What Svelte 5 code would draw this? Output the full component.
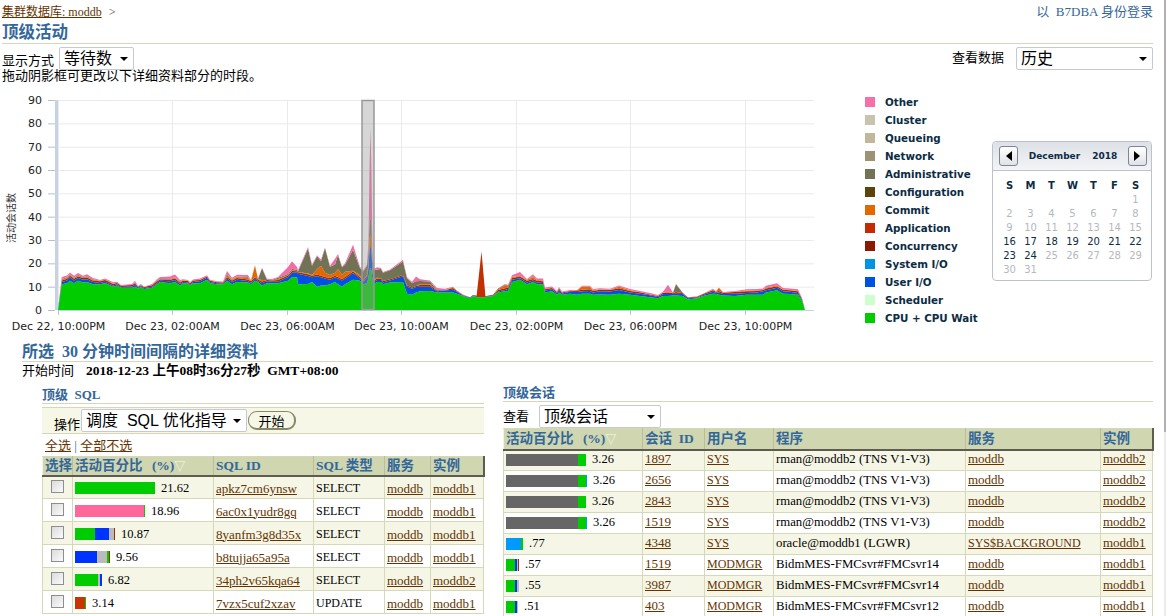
<script lang="ts">
	// x, cpu, blue, red/orange, olive, pink (session counts)
	const samples = [
		[58,0,0,0,0,0],[61.7,11,1,1,0.3,0.8],[67,11.5,1.2,1,0.3,0.8],[70,12.5,1.5,1,0.3,0.8],[74,11.5,1.2,1,0.2,0.8],[78,12.5,1.2,1,0.3,0.8],
		[83,11.8,1.2,0.8,0.3,0.6],[87,12,1.2,1,0.3,0.8],[93,11,1,1,0.2,0.5],[100,11,0.6,0.8,0.1,0.4],[105,11.5,0.6,0.8,0.1,0.5],[108,11,0.6,0.8,0.1,0.5],
		[113,10,0.5,0.8,0.1,0.5],[117,10.5,0.5,0.6,0.1,0.4],[121,9.5,0.4,0.5,0.1,0.2],[132,9.5,0.6,0.6,0.1,0.4],[135,10,0.8,1,0.1,0.6],[138,9.2,0.4,0.4,0.1,0.2],
		[141,9.8,0.4,0.4,0.1,0.4],[144,9,0.4,0.4,0,0.2],[152,9.5,0.5,0.6,0.1,0.4],[157,11,0.6,0.8,0.2,0.6],[160,12,0.5,0.6,0.2,0.9],[170,11.5,0.8,0.8,0.2,1],
		[175,12,0.8,1,0.2,1.2],[180,10.5,0.6,1,0.2,0.6],[183,11.5,0.5,0.6,0.1,0.5],[188,11.5,0.4,0.5,0.1,0.4],[190,10.5,0.4,0.6,0.1,0.4],[193,11.5,0.5,0.6,0.1,0.4],
		[200,11.5,0.8,0.6,0.1,0.5],[207,13,0.8,0.6,0.1,0.4],[210,11.5,0.5,0.5,0.1,0.4],[217,11,0.5,0.4,0.1,0.3],[223,11,0.4,0.4,0.1,0.3],[227,12.5,1,1.5,0.5,1.2],
		[232,11,1,1,0.2,0.6],[237,12,1,1,0.3,0.8],[248,11.8,0.6,1.4,0.4,0.8],[251,11,0.6,0.8,0.2,0.3],[255,12.5,1,5.5,0.1,0.2],[258,12,0.4,0.8,0.1,0.2],
		[262,10.5,1,1.4,5,0.2],[267,11.5,0.8,0.5,0.2,0.4],[272,11.5,0.6,0.5,0.3,0.4],[278,11.5,0.6,1.2,0.5,0.4],[288,12.5,1.6,0.8,0.5,3],[292,14,2,1,0.7,3.2],
		[297,14,2.2,0.4,0.6,1.2],[298,11,4.5,0.8,0.3,0.4],[308,11.2,3.4,1,10.7,0.7],[312,12,2,1,4,0.5],[317,10,4.5,3,5.5,0.5],[321,10.5,3.5,5,2,0.6],
		[325,10.5,3,2.5,10.5,0.3],[330,11,2,2,3.5,0.5],[335,12,2,2,3.5,2.5],[338,11,2.5,4,6,0.5],[342,10,2.6,2.5,3.2,0.3],[345,11,2.4,3,3,0.6],
		[353,13,2.8,1,9,2.2],[360,12.5,1,1.4,3.1,0.5],[363,11,0.8,0.6,4,0.4],[367,11.5,2.5,1,4,0.4],[368.5,14,4,2,5,4],[369.6,17,9,5,7,24],[370.5,18,9,5,7,39],
		[371.4,17,9,5,7,22],[372.5,13,3,1.5,4,3],[374,11,1,1,4,0.6],[377,12,0.8,1,3.5,1],[381,12,0.8,0.8,4,0.4],[383,11,0.8,0.6,3.6,0.3],[390,11.8,0.8,0.6,3.8,0.4],
		[403,12,2.5,0.5,5.8,0.7],[407,7,3,0.6,3,0.4],[412,6.5,2.6,0.6,1.8,0.6],[416,7.5,2.4,0.4,2,2],[420,8,2,1,1.4,0.8],[430,8.2,1.8,1,1.2,0.5],
		[437,7.5,0.5,0.4,0.2,0.8],[445,7.5,0.8,0.2,0.1,0.5],[453,7.5,1.2,1,0.1,0.2],[457,7,0.8,0.3,0.1,0.2],[463,6,0.2,0.2,0,0.2],[470,5,0.3,0.2,0,0],
		[473,6,0.2,0.2,0,0],[477,5.5,0.2,0.4,0,0],[485,5.5,0.2,0.2,0,0],[493,6,0.2,0.3,0,0],[498,7.5,0.4,1,0.3,0],
		[505,8,0.6,2,0.3,0.2],[508,8,1,1.5,0.1,0.2],[512,12,1,1,0.1,0.8],[520,13,0.6,1,0.1,1.6],[527,11,0.8,1,0.1,0.4],[533,12,0.6,1.6,0.1,1],
		[537,11,0.8,1,0.1,0.6],[543,11,0.6,1,0.1,0.8],[545,7.5,0.8,0.6,0.1,0.6],[552,8,0.8,0.6,0.1,0.6],[557,6.5,0.8,0.4,0,0.4],[559,7.5,1,0.8,0.1,0.5],
		[562,6.5,0.6,0.4,0,0.4],[570,7,0.8,0.4,0,0.4],[577,6.5,1.2,0.6,0,0.3],[582,7,1,2,0.1,0.3],[590,7,1.2,1.6,0.2,0.4],[593,6.5,1,1,0.1,0.4],
		[600,6.6,1.4,0.8,0.1,0.4],[610,6.5,1.4,0.8,0,0.4],[619,7,1.6,1.4,0.1,0.4],[630,6.5,1,1,0,0.5],[640,6,1,0.6,0,0.5],[650,5.5,0.8,0.4,0,0.6],
		[658,5,0.6,0.4,0,0.4],[663,6,0.8,0.6,0,0.4],[668,6,0.8,0.8,0.2,3],[673,6.2,0.6,0.4,0.1,0.2],[676,6.2,0.8,0.8,3.2,0.1],[683,6,0.8,0.4,0,0.2],
		[688,4.5,0.5,0.4,0,0.1],[697,5,0.4,0.3,0,0.2],[703,6,0.4,0.4,0,0.2],[713,7,0.8,0.8,0.1,0.4],[716,6.8,0.6,0.4,0,0.3],[719,6.5,1,2,0,0.1],
		[723,6.2,0.6,0.6,0,0.3],[735,6,1,0.8,0,0.4],[747,6.5,0.8,1,0,0.6],[757,6.5,1,0.7,0.2,0.6],[763,6.5,1.5,0.6,0.1,0.5],[766,7.5,1,1,0.1,0.8],
		[777,8.5,1,1,0,1],[783,7,1,0.8,0,0.6],[790,6.8,1,0.8,0,0.6],[798,6.5,0.8,0.8,0,0.8],[802,4,0.5,0.3,0,0.3],[805,0,0,0,0,0]
	];
	// the red column splits into a thin dark edge and orange on top
	const layers = [
		{ color: '#00cc00', value: (s) => s[1] },
		{ color: '#0052e6', value: (s) => s[2] },
		{ color: '#a32a00', value: (s) => Math.min(s[3], 0.7) },
		{ color: '#e46800', value: (s) => Math.max(s[3] - 0.7, 0) },
		{ color: '#717354', value: (s) => s[4] },
		{ color: '#ef6ea5', value: (s) => s[5] }
	];
	const yOf = (v) => 310 - v * 2.333;

	function layerPaths() {
		const out = [];
		const base = samples.map(() => 0);
		for (const layer of layers) {
			const lower = base.slice();
			samples.forEach((s, i) => (base[i] += layer.value(s)));
			const top = samples.map((s, i) => `${s[0]},${yOf(base[i]).toFixed(1)}`);
			const bottom = samples.map((s, i) => `${s[0]},${yOf(lower[i]).toFixed(1)}`).reverse();
			out.push({ color: layer.color, d: `M${top.join('L')}L${bottom.join('L')}Z` });
		}
		return out;
	}
	const areas = layerPaths();

	const yTicks = [0, 10, 20, 30, 40, 50, 60, 70, 80, 90];
	const xTicks = [
		{ x: 58.5, t: 'Dec 22, 10:00PM' },
		{ x: 172.5, t: 'Dec 23, 02:00AM' },
		{ x: 287.5, t: 'Dec 23, 06:00AM' },
		{ x: 401.5, t: 'Dec 23, 10:00AM' },
		{ x: 516.5, t: 'Dec 23, 02:00PM' },
		{ x: 630.5, t: 'Dec 23, 06:00PM' },
		{ x: 745.5, t: 'Dec 23, 10:00PM' }
	];

	const legend = [
		['Other', '#f76fa9'], ['Cluster', '#c9c2ae'], ['Queueing', '#c2b79b'], ['Network', '#9c9274'],
		['Administrative', '#717354'], ['Configuration', '#5c440b'], ['Commit', '#e46800'], ['Application', '#c42b00'],
		['Concurrency', '#8b1a00'], ['System I/O', '#0094e7'], ['User I/O', '#0052e6'], ['Scheduler', '#ccffcc'], ['CPU + CPU Wait', '#00cc00']
	];

	const weekdays = ['S', 'M', 'T', 'W', 'T', 'F', 'S'];
	const days = [];
	for (let i = 0; i < 6; i++) days.push(0);
	for (let d = 1; d <= 31; d++) days.push(d);

	const green = '#00cc00', blue = '#0033ff', gray = '#bbbbbb', dark = '#993300', pink = '#ff6699', red = '#cc3300', slate = '#666666', sky = '#0099ff';

	const sqlRows = [
		{ bar: [[green, 80]], val: '21.62', id: 'apkz7cm6ynsw', type: 'SELECT', inst: 'moddb1' },
		{ bar: [[pink, 69], [green, 1]], val: '18.96', id: '6ac0x1yudr8gq', type: 'SELECT', inst: 'moddb1' },
		{ bar: [[green, 20], [blue, 14], [gray, 5], [dark, 1]], val: '10.87', id: '8yanfm3g8d35x', type: 'SELECT', inst: 'moddb1' },
		{ bar: [[blue, 22], [gray, 10], [green, 2], [dark, 1]], val: '9.56', id: 'b8tujja65a95a', type: 'SELECT', inst: 'moddb1' },
		{ bar: [[green, 23], [gray, 2], [blue, 2]], val: '6.82', id: '34ph2v65kqa64', type: 'SELECT', inst: 'moddb2' },
		{ bar: [[red, 10], [green, 1]], val: '3.14', id: '7vzx5cuf2xzav', type: 'UPDATE', inst: 'moddb1' }
	];

	const rman = 'rman@moddb2 (TNS V1-V3)';
	const fmc14 = 'BidmMES-FMCsvr#FMCsvr14';
	const sessRows = [
		{ bar: [[slate, 72], [green, 8]], val: '3.26', id: '1897', user: 'SYS', prog: rman, svc: 'moddb', inst: 'moddb2' },
		{ bar: [[slate, 72], [green, 8], [sky, 1]], val: '3.26', id: '2656', user: 'SYS', prog: rman, svc: 'moddb', inst: 'moddb2' },
		{ bar: [[slate, 72], [green, 8]], val: '3.26', id: '2843', user: 'SYS', prog: rman, svc: 'moddb', inst: 'moddb2' },
		{ bar: [[slate, 72], [green, 8], [sky, 1]], val: '3.26', id: '1519', user: 'SYS', prog: rman, svc: 'moddb', inst: 'moddb2' },
		{ bar: [[sky, 15], [green, 2]], val: '.77', id: '4348', user: 'SYS', prog: 'oracle@moddb1 (LGWR)', svc: 'SYS$BACKGROUND', inst: 'moddb1' },
		{ bar: [[green, 9], [blue, 2], [gray, 1], [dark, 1]], val: '.57', id: '1519', user: 'MODMGR', prog: fmc14, svc: 'moddb', inst: 'moddb1' },
		{ bar: [[green, 9], [blue, 2], [gray, 2]], val: '.55', id: '3987', user: 'MODMGR', prog: fmc14, svc: 'moddb', inst: 'moddb1' },
		{ bar: [[green, 9], [blue, 2], [gray, 1]], val: '.51', id: '403', user: 'MODMGR', prog: 'BidmMES-FMCsvr#FMCsvr12', svc: 'moddb', inst: 'moddb1' }
	];
</script>

<div class="page">
	<div class="crumbs">
		<div><a href="#a">集群数据库: moddb</a> <span class="gt">&gt;</span></div>
		<a class="login" href="#b">以&nbsp; B7DBA 身份登录</a>
	</div>
	<h1>顶级活动</h1>

	<div class="controls">
		<div class="ctl-left">
			<span>显示方式</span>
			<div class="select mode">等待数<i class="caret"></i></div>
		</div>
		<div class="ctl-right">
			<span>查看数据</span>
			<div class="select range">历史<i class="caret"></i></div>
		</div>
	</div>
	<p class="hint">拖动阴影框可更改以下详细资料部分的时段。</p>

	<div class="chart-row">
		<svg class="chart" viewBox="0 90 860 245" width="860" height="245">
			{#each yTicks as v}
				<line x1="58" x2="814" y1={yOf(v) + 0.5} y2={yOf(v) + 0.5} stroke={v === 0 ? '#c5d3e4' : '#e8eaee'} stroke-width="1" />
				<line x1="48" x2="55" y1={yOf(v) + 0.5} y2={yOf(v) + 0.5} stroke="#b8c0cc" />
				<text class="tick" x="42" y={yOf(v) + 4} text-anchor="end">{v}</text>
			{/each}
			{#each xTicks as tick}
				<line x1={tick.x} x2={tick.x} y1="100" y2="315" stroke="#e8eaee" />
				<line x1={tick.x} x2={tick.x} y1="310" y2="315" stroke="#b8c6d8" />
				<text class="tick" x={tick.x} y="330" text-anchor="middle">{tick.t}</text>
			{/each}
			<rect x="55" y="100" width="3" height="210" fill="#c5d3e4" />
			{#each areas as area}
				<path d={area.d} fill={area.color} />
			{/each}
			<path d="M476.5,297L481.5,251.5L485.5,297Z" fill="#c03000" />
			<rect x="362" y="100.5" width="12" height="209" fill="#999" fill-opacity="0.4" stroke="#999" stroke-width="1.5" />
			<text class="axis-title" transform="translate(15 243) rotate(-90)">活动会话数</text>
		</svg>

		<ul class="legend">
			{#each legend as [name, color]}
				<li><span class="swatch" style="background:{color}"></span>{name}</li>
			{/each}
		</ul>

		<div class="calendar">
			<div class="cal-head">
				<button class="cal-btn" aria-label="previous"><i class="tri left"></i></button>
				<span class="cal-title"><b>December</b><b>2018</b></span>
				<button class="cal-btn" aria-label="next"><i class="tri right"></i></button>
			</div>
			<div class="cal-grid">
				{#each weekdays as w}<b>{w}</b>{/each}
				{#each days as d}
					<span class:on={d >= 16 && d <= 24}>{d || ''}</span>
				{/each}
			</div>
		</div>
	</div>

	<h2>所选&nbsp; <span>30</span> 分钟时间间隔的详细资料</h2>
	<div class="start">
		<span>开始时间</span>
		<b>2018-12-23 上午08时36分27秒&nbsp; GMT+08:00</b>
	</div>

	<div class="columns">
		<section class="col-sql">
			<h3>顶级&nbsp; SQL</h3>
			<div class="action-bar">
				<span>操作</span>
				<div class="select tune">调度&nbsp; SQL 优化指导<i class="caret"></i></div>
				<button class="go">开始</button>
			</div>
			<div class="select-links"><a href="#c">全选</a> <span class="sep">|</span> <a href="#d">全部不选</a></div>
			<table class="sql">
				<colgroup>
					<col style="width:30px" /><col style="width:141px" /><col style="width:100px" /><col style="width:71px" /><col style="width:46px" /><col style="width:53px" />
				</colgroup>
				<thead>
					<tr>
						<th>选择</th>
						<th>活动百分比 <span class="pct">(%)</span><span class="sort">▽</span></th>
						<th>SQL ID</th>
						<th>SQL 类型</th>
						<th>服务</th>
						<th>实例</th>
					</tr>
				</thead>
				<tbody>
					{#each sqlRows as row}
						<tr>
							<td class="chk"><span class="box"></span></td>
							<td>
								<div class="barcell">
									{#each row.bar as [c, w]}<i style="background:{c};width:{w}px"></i>{/each}
									<span class="val">{row.val}</span>
								</div>
							</td>
							<td><a href="#e">{row.id}</a></td>
							<td class="caps">{row.type}</td>
							<td><a href="#f">moddb</a></td>
							<td><a href="#g">{row.inst}</a></td>
						</tr>
					{/each}
				</tbody>
			</table>
		</section>

		<section class="col-sess">
			<h3>顶级会话</h3>
			<div class="view-bar">
				<span>查看</span>
				<div class="select sess">顶级会话<i class="caret"></i></div>
			</div>
			<table class="sess-table">
				<colgroup>
					<col style="width:139px" /><col style="width:62px" /><col style="width:69px" /><col style="width:192px" /><col style="width:135px" /><col style="width:52px" />
				</colgroup>
				<thead>
					<tr>
						<th>活动百分比 <span class="pct">(%)</span><span class="sort">▽</span></th>
						<th>会话&nbsp; ID</th>
						<th>用户名</th>
						<th>程序</th>
						<th>服务</th>
						<th>实例</th>
					</tr>
				</thead>
				<tbody>
					{#each sessRows as row}
						<tr>
							<td>
								<div class="barcell">
									{#each row.bar as [c, w]}<i style="background:{c};width:{w}px"></i>{/each}
									<span class="val">{row.val}</span>
								</div>
							</td>
							<td><a href="#h">{row.id}</a></td>
							<td class="caps"><a href="#i">{row.user}</a></td>
							<td class="prog">{row.prog}</td>
							<td class:caps={row.svc !== 'moddb'}><a href="#j">{row.svc}</a></td>
							<td><a href="#k">{row.inst}</a></td>
						</tr>
					{/each}
				</tbody>
			</table>
		</section>
	</div>

	<div class="edge"></div>
</div>

<style>
	:global(body) {
		margin: 0;
		background: #fff;
	}

	.page {
		position: relative;
		box-sizing: border-box;
		width: 1167px;
		height: 616px;
		overflow: hidden;
		padding: 0 14px 0 2px;
		font-family: 'Liberation Serif', 'Noto Sans CJK SC', serif;
		font-size: 13px;
		color: #000;
	}

	a {
		color: #663300;
	}

	.crumbs {
		display: flex;
		justify-content: space-between;
		height: 22px;
		padding-top: 4px;
		box-sizing: border-box;
		font-size: 12px;
		line-height: 16px;
	}

	.gt {
		margin-left: 4px;
		color: #333;
	}

	.login {
		color: #336699;
		text-decoration: none;
		font-size: 13px;
	}

	h1 {
		margin: 0;
		height: 21px;
		font-size: 16.5px;
		line-height: 22px;
		color: #336699;
		border-bottom: 1px solid #d6d6b8;
	}

	.controls {
		display: flex;
		justify-content: space-between;
		height: 24px;
		margin-top: 3px;
	}

	.ctl-left,
	.ctl-right {
		display: flex;
		align-items: flex-start;
	}

	.ctl-left span {
		margin-top: 7px;
		line-height: 14px;
	}

	.ctl-right span {
		margin-right: 12px;
		margin-top: 4px;
		line-height: 14px;
	}

	.select {
		position: relative;
		box-sizing: border-box;
		height: 23px;
		padding-left: 4px;
		background: #fff;
		border: 1px solid #c4c9d2;
		border-radius: 2px;
		font-family: 'Liberation Sans', 'Noto Sans CJK SC', sans-serif;
		font-size: 16px;
		line-height: 21px;
		white-space: nowrap;
	}

	.caret {
		position: absolute;
		right: 5px;
		top: 9px;
		border: 4px solid transparent;
		border-top: 4px solid #000;
		border-bottom: 0;
	}

	.mode {
		width: 75px;
		margin-left: 5px;
		padding-left: 4px;
	}

	.range {
		width: 137px;
	}

	.hint {
		margin: -3px 0 6px;
		height: 16px;
		line-height: 16px;
	}

	.chart-row {
		display: flex;
		height: 251px;
		margin-left: -2px;
	}

	.chart {
		display: block;
		flex: none;
	}

	.tick {
		font-family: 'DejaVu Sans', sans-serif;
		font-size: 11px;
		fill: #222;
	}

	.axis-title {
		font-family: 'Noto Sans CJK SC', sans-serif;
		font-size: 10px;
		fill: #333;
	}

	.legend {
		flex: none;
		width: 127px;
		margin: 3px 0 0 5px;
		padding: 0;
		list-style: none;
		font-family: 'DejaVu Sans', sans-serif;
		font-size: 10.3px;
		font-weight: bold;
		color: #0c2c44;
	}

	.legend li {
		display: flex;
		align-items: center;
		height: 18px;
	}

	.swatch {
		width: 10px;
		height: 10px;
		margin-right: 10px;
	}

	.calendar {
		box-sizing: border-box;
		flex: none;
		width: 160px;
		height: 140px;
		margin-top: 51px;
		border: 1px solid #bcc2ca;
		border-radius: 4px;
		font-family: 'DejaVu Sans', sans-serif;
		font-size: 10px;
	}

	.cal-head {
		display: flex;
		align-items: center;
		justify-content: space-between;
		height: 28px;
		padding: 0 4px 0 6px;
		background: linear-gradient(#dde1e7, #f3f4f7);
		border-bottom: 1px solid #bcc2ca;
		border-radius: 4px 4px 0 0;
	}

	.cal-title {
		display: flex;
		gap: 12px;
		font-size: 9px;
		color: #0c2c44;
	}

	.cal-btn {
		display: flex;
		align-items: center;
		justify-content: center;
		width: 19px;
		height: 20px;
		padding: 0;
		background: linear-gradient(#fff, #dfe2e7);
		border: 1px solid #7d8590;
		border-radius: 3px;
	}

	.tri {
		border: 5px solid transparent;
	}

	.tri.left {
		border-right: 6px solid #000;
		border-left: 0;
	}

	.tri.right {
		border-left: 6px solid #000;
		border-right: 0;
	}

	.cal-grid {
		display: grid;
		grid-template-columns: repeat(7, 21px);
		grid-auto-rows: 14px;
		padding: 8px 0 0 6px;
		line-height: 14px;
		text-align: center;
		color: #b4b8bd;
	}

	.cal-grid b {
		color: #0c2c44;
	}

	.cal-grid .on {
		color: #0c2c44;
	}

	h2 {
		margin: 0 0 0 20px;
		height: 21px;
		box-sizing: border-box;
		font-size: 16px;
		line-height: 22px;
		font-weight: bold;
		color: #336699;
		border-bottom: 1px solid #d6d6b8;
	}

	h2 span {
		font-family: 'Liberation Serif', serif;
	}

	.start {
		display: flex;
		gap: 12px;
		height: 23px;
		margin-left: 20px;
		line-height: 18px;
	}

	.start b {
		font-size: 13.5px;
	}

	.columns {
		display: flex;
		align-items: flex-start;
		gap: 19px;
		margin-left: 40px;
		margin-top: 1px;
	}

	.col-sql {
		flex: none;
		width: 442px;
	}

	.col-sess {
		flex: none;
		width: 650px;
		margin-top: -2px;
	}

	h3 {
		margin: 0;
		height: 18px;
		box-sizing: border-box;
		font-size: 13px;
		line-height: 17px;
		color: #336699;
		border-bottom: 1px solid #d6d6b8;
	}

	.action-bar {
		display: flex;
		align-items: center;
		height: 27px;
		margin-top: 3px;
		padding-left: 12px;
		background: #f7f7e7;
		border-bottom: 1px solid #d6d6b8;
		border-top: 1px solid #d6d6b8;
		box-sizing: border-box;
	}

	.action-bar span {
		margin-top: 6px;
	}

	.tune {
		width: 166px;
		margin-left: 1px;
		padding-left: 4px;
	}

	.go {
		box-sizing: border-box;
		width: 48px;
		height: 19px;
		margin: 0 0 0 1px;
		padding: 0;
		background: #f7f7e7;
		border: 1px solid #888866;
		border-right-width: 2px;
		border-bottom-width: 2px;
		border-radius: 9px;
		font-family: 'Noto Sans CJK SC', sans-serif;
		font-size: 13px;
		line-height: 15px;
		color: #000;
	}

	.select-links {
		height: 22px;
		padding-left: 3px;
		line-height: 24px;
	}

	.sep {
		color: #336699;
	}

	table {
		width: 100%;
		table-layout: fixed;
		border-collapse: collapse;
		font-size: 13px;
	}

	th {
		box-sizing: border-box;
		height: 19px;
		padding: 0 2px;
		text-align: left;
		font-size: 13.5px;
		line-height: 16px;
		color: #336699;
		white-space: nowrap;
		background: #d0d6b0;
		border-left: 1px solid #f2f2e0;
		border-right: 1px solid #6b6b5c;
		border-bottom: 2px solid #5c5c50;
		border-top: 1px solid #d6d6b8;
	}

	th:not(:last-child) {
		border-right: 1px solid #b8bd9a;
	}

	th:last-child {
		border-right: 2px solid #5c5c50;
	}

	.sess-table th {
		height: 21px;
	}

	.pct {
		font-family: 'Liberation Serif', serif;
		margin-left: 6px;
	}

	.sort {
		font-family: 'DejaVu Sans', sans-serif;
		color: #eef0de;
		font-size: 14px;
		font-weight: normal;
	}

	td {
		box-sizing: border-box;
		padding: 0 2px;
		border: 1px solid #d6d9b8;
		white-space: nowrap;
		overflow: hidden;
	}

	td.caps {
		font-size: 12px;
	}

	td.prog {
		font-size: 12.75px;
	}

	tbody tr:nth-child(odd) td {
		background: #f5f6e6;
	}

	.sql td {
		height: 23px;
		padding-top: 3px;
	}

	.sess-table td {
		height: 21px;
		padding-bottom: 2px;
	}

	.chk {
		text-align: center;
	}

	.box {
		display: inline-block;
		box-sizing: border-box;
		width: 13px;
		height: 13px;
		background: linear-gradient(135deg, #dcdcdc, #fafafa);
		border: 1px solid #8e8e8e;
	}

	.barcell {
		display: flex;
		align-items: center;
		margin-top: -1px;
	}

	.sess-table .barcell {
		margin-top: 1px;
	}

	.barcell i {
		display: block;
		height: 12px;
	}

	.val {
		margin-left: 6px;
		font-size: 12.5px;
	}

	.view-bar {
		display: flex;
		align-items: center;
		height: 24px;
		margin-top: 2px;
	}

	.view-bar span {
		margin-top: -2px;
	}

	.sess {
		width: 122px;
		margin-left: 10px;
	}

	/* window scrollbar edge */
	.edge {
		position: absolute;
		top: 0;
		right: 1px;
		width: 2px;
		height: 616px;
		background: #ececec;
	}

	.edge::before {
		content: '';
		display: block;
		height: 432px;
		background: #b0b0b0;
	}
</style>
